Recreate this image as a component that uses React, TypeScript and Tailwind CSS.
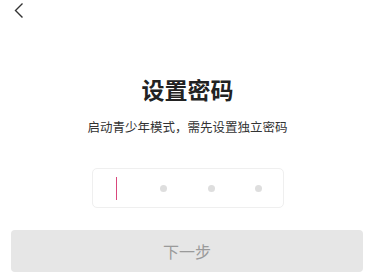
const cells = [0, 1, 2, 3]

export default function App() {
  return (
    <div className="min-h-screen overflow-hidden bg-white font-['Noto_Sans_CJK_SC','Noto_Sans',sans-serif]">
      <div className="w-[375px]">
        <div className="h-[20px] pl-[13px] pt-[2px]">
          <svg width="12" height="17" viewBox="0 0 12 17" fill="none" className="text-[#333]">
            <path d="M9.5 1.5 L2.5 8.5 L9.5 15.5" stroke="currentColor" strokeWidth="1.4" />
          </svg>
        </div>

        <h1 className="mt-[58px] text-center text-[23px] font-bold leading-[23px] text-[#222]">
          设置密码
        </h1>
        <p className="mt-[19px] text-center text-[12.5px] leading-[13px] text-[#333]">
          启动青少年模式，需先设置独立密码
        </p>

        <div className="mx-auto mt-[35px] flex h-[40px] w-[192px] rounded-[5px] border border-[#efefef]">
          {cells.map((i) => (
            <div key={i} className="flex flex-1 items-center justify-center">
              {i === 0 ? (
                <span className="h-[23px] w-[1.5px] bg-[#d9487c]" />
              ) : (
                <span className="h-[7px] w-[7px] rounded-full bg-[#dedede]" />
              )}
            </div>
          ))}
        </div>

        <button className="ml-[11px] mt-[22px] flex h-[42px] w-[352px] items-center justify-center rounded-[4px] bg-[#e6e6e6] text-[16px] text-[#9a9a9a]">
          下一步
        </button>
      </div>
    </div>
  )
}
